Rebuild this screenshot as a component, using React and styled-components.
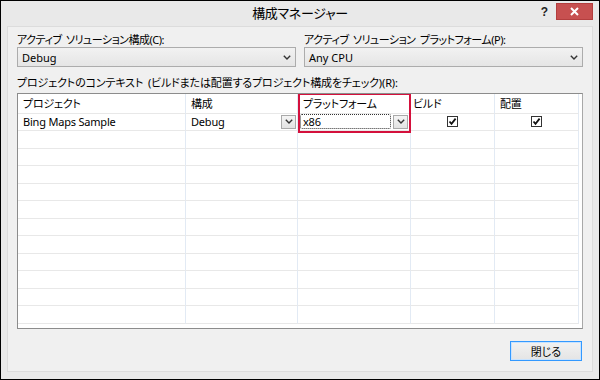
import React from "react";
import styled, { createGlobalStyle } from "styled-components";

const GlobalStyle = createGlobalStyle`
  html, body {
    margin: 0;
    padding: 0;
    background: #000;
  }
  body {
    font-family: "Noto Sans", "Noto Sans CJK JP", sans-serif;
    font-feature-settings: "palt";
  }
`;

const Window = styled.div`
  width: 600px;
  height: 380px;
  box-sizing: border-box;
  border: 1px solid #000;
  background: #e9e9e9;
  display: flex;
  flex-direction: column;
  color: #000;
`;

const TitleBar = styled.div`
  height: 26px;
  display: grid;
  grid-template-columns: 1fr auto 1fr;
  align-items: center;
`;

const Title = styled.div`
  grid-column: 2;
  font-size: 13px;
  letter-spacing: -0.3px;
  font-family: "Noto Sans CJK JP", sans-serif;
  font-feature-settings: "palt";
  padding-bottom: 2px;
`;

const Controls = styled.div`
  grid-column: 3;
  justify-self: end;
  align-self: start;
  display: flex;
  align-items: center;
  gap: 8px;
  margin-top: 2px;
  margin-right: 6px;
`;

const Help = styled.span`
  font-family: "Liberation Sans", sans-serif;
  font-weight: bold;
  font-size: 12px;
  color: #222;
`;

const CloseBtn = styled.div`
  width: 37px;
  height: 17px;
  box-sizing: border-box;
  background: #c75050;
  border: 1px solid #b33e3e;
  display: flex;
  align-items: center;
  justify-content: center;
`;

const Client = styled.div`
  flex: 1;
  margin: 0 6px 7px 6px;
  background: #f0f0f0;
  border: 1px solid #dcdcdc;
  padding: 5px 9px 10px 9px;
  display: flex;
  flex-direction: column;
  font-size: 11px;
`;

const TopRow = styled.div`
  display: grid;
  grid-template-columns: 1fr 1fr;
  gap: 8px;
`;

const Field = styled.div`
  display: flex;
  flex-direction: column;
`;

const Label = styled.div`
  font-size: 11px;
  letter-spacing: ${(p) => p.$ls ?? -0.4}px;
  word-spacing: 2px;
  line-height: 15px;
  height: 15px;
  white-space: nowrap;
  margin-top: ${(p) => p.$mt || 0}px;
`;

const Combo = styled.div`
  height: 20px;
  box-sizing: border-box;
  border: 1px solid #acacac;
  background: linear-gradient(#f2f2f2, #e5e5e5);
  display: flex;
  align-items: center;
  justify-content: space-between;
  padding: 0 4px 0 4px;
  font-size: 11px;
`;

const Table = styled.div`
  position: relative;
  margin-top: 3px;
  height: 236px;
  box-sizing: border-box;
  border: 1px solid #8c8c8c;
  border-right-color: #a8a8a8;
  background: #fff;
  overflow: hidden;
`;

const Row = styled.div`
  display: grid;
  grid-template-columns: 168px 112px 113px 84px 84px;
  height: ${(p) => (p.$header ? 19.5 : 17.5)}px;
`;

const Cell = styled.div`
  border-right: 1px solid #e2eaf4;
  border-bottom: 1px solid #e8e8e8;
  display: flex;
  align-items: center;
  justify-content: ${(p) => (p.$center ? "center" : p.$spread ? "space-between" : "flex-start")};
  padding-left: ${(p) => (p.$center ? 0 : p.$pl ?? 5)}px;
  padding-right: ${(p) => p.$pr ?? 0}px;
  font-size: 11px;
  letter-spacing: -0.2px;
  white-space: nowrap;
  min-width: 0;
  overflow: hidden;
`;

const Highlight = styled.div`
  position: absolute;
  left: 280px;
  top: -1px;
  width: 113px;
  height: 40px;
  box-sizing: border-box;
  border: 2px solid #d4103c;
  pointer-events: none;
`;

const MiniDrop = styled.div`
  width: 15px;
  height: 14px;
  box-sizing: border-box;
  border: 1px solid #a9a9a9;
  background: linear-gradient(#f4f4f4, #e2e2e2);
  display: flex;
  align-items: center;
  justify-content: center;
  flex-shrink: 0;
`;

const EditBox = styled.div`
  flex: 1;
  height: 15px;
  box-sizing: border-box;
  border: 1px dotted #333;
  border-radius: 2px;
  display: flex;
  align-items: center;
  padding-left: 2px;
  margin-right: 2px;
`;

const Check = styled.div`
  width: 11px;
  height: 11px;
  box-sizing: border-box;
  border: 1px solid #333;
  background: #fff;
  display: flex;
  align-items: center;
  justify-content: center;
`;

const Footer = styled.div`
  display: flex;
  justify-content: flex-end;
  margin-top: 12px;
`;

const Button = styled.div`
  width: 72px;
  height: 20px;
  box-sizing: border-box;
  border: 1px solid #3399ff;
  box-shadow: inset 0 0 0 1px #c8e3ff;
  background: linear-gradient(#f2f2f2, #e4e4e4);
  display: flex;
  align-items: center;
  justify-content: center;
  font-size: 11px;
  margin-right: 1px;
`;

const Chevron = () => (
  <svg width="8" height="5" viewBox="0 0 8 5">
    <path d="M0.8 0.8 L4 4 L7.2 0.8" fill="none" stroke="#333" strokeWidth="1.4" />
  </svg>
);

const CheckMark = () => (
  <svg width="9" height="9" viewBox="0 0 9 9">
    <path d="M1.5 4.5 L3.5 6.8 L7.6 1.6" fill="none" stroke="#111" strokeWidth="1.8" />
  </svg>
);

const XIcon = () => (
  <svg width="9" height="9" viewBox="0 0 9 9">
    <path d="M1 1 L8 8 M8 1 L1 8" stroke="#fff" strokeWidth="2" />
  </svg>
);

const EMPTY_ROWS = 11;

const App = () => {
  return (
    <>
      <GlobalStyle />
      <Window>
        <TitleBar>
          <Title>構成マネージャー</Title>
          <Controls>
            <Help>?</Help>
            <CloseBtn>
              <XIcon />
            </CloseBtn>
          </Controls>
        </TitleBar>
        <Client>
          <TopRow>
            <Field>
              <Label $ls={-0.5}>アクティブ ソリューション構成(C):</Label>
              <Combo>
                <span>Debug</span>
                <Chevron />
              </Combo>
            </Field>
            <Field>
              <Label $ls={-0.5}>アクティブ ソリューション プラットフォーム(P):</Label>
              <Combo>
                <span>Any CPU</span>
                <Chevron />
              </Combo>
            </Field>
          </TopRow>
          <Label $mt={8} $ls={-0.15}>
            プロジェクトのコンテキスト (ビルドまたは配置するプロジェクト構成をチェック)(R):
          </Label>
          <Table>
            <Row $header>
              <Cell>プロジェクト</Cell>
              <Cell>構成</Cell>
              <Cell>プラットフォーム</Cell>
              <Cell $pl={2}>ビルド</Cell>
              <Cell>配置</Cell>
            </Row>
            <Row>
              <Cell>Bing Maps Sample</Cell>
              <Cell $pr={1} $spread>
                <span>Debug</span>
                <MiniDrop>
                  <Chevron />
                </MiniDrop>
              </Cell>
              <Cell $pl={2} $pr={2}>
                <EditBox>x86</EditBox>
                <MiniDrop>
                  <Chevron />
                </MiniDrop>
              </Cell>
              <Cell $center>
                <Check>
                  <CheckMark />
                </Check>
              </Cell>
              <Cell $center>
                <Check>
                  <CheckMark />
                </Check>
              </Cell>
            </Row>
            {Array.from({ length: EMPTY_ROWS }).map((_, i) => (
              <Row key={i}>
                <Cell />
                <Cell />
                <Cell />
                <Cell />
                <Cell />
              </Row>
            ))}
            <Highlight />
          </Table>
          <Footer>
            <Button>閉じる</Button>
          </Footer>
        </Client>
      </Window>
    </>
  );
};

export default App;
